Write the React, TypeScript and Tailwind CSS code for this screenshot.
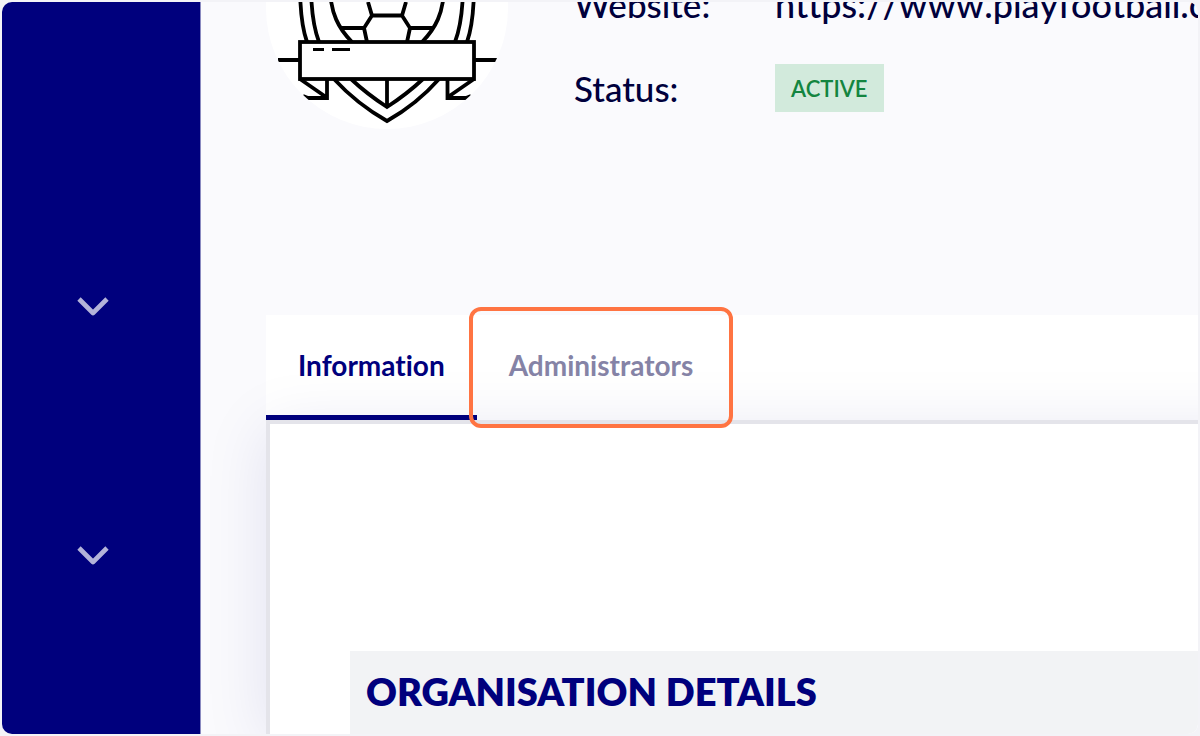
import { ChevronDown } from "lucide-react";

type Detail = {
  label: string;
  value: React.ReactNode;
};

const details: Detail[] = [
  {
    label: "Website:",
    value: (
      <a href="https://www.playfootball.com" className="text-[36px] whitespace-nowrap [font-kerning:none]">
        https://www.playfootball.com
      </a>
    ),
  },
  {
    label: "Status:",
    value: (
      <span className="flex h-12 items-center bg-[#d2eadc] px-4 text-[22px] font-semibold text-[#138540]">ACTIVE</span>
    ),
  },
];

const menuGroups = ["Expand competitions menu", "Expand settings menu"];

function Crest() {
  return (
    <svg
      viewBox="1 2 242 242"
      className="mb-px size-[242px] shrink-0 rounded-full bg-white"
      fill="none"
      stroke="#000"
      strokeWidth="3.8"
      role="img"
      aria-label="Club crest"
    >
      {/* shield sides */}
      <path d="M35 100C35 122 36 140 42 157M46 100C46 124 48 141 54 157" />
      <path d="M209 100C209 122 208 140 202 157M198 100C198 124 196 141 190 157" />
      {/* ball */}
      <path d="M65 105C66 128 73 143 87 157M179 105C178 128 171 143 157 157" />
      <path d="M103 117L107 130.500H137L141 117M107 130.500L99 143L102 157M137 130.500L145 143L142 157M75 143H99M145 143H169" />
      {/* shield tip */}
      <path d="M69 194Q92 219 122 236Q152 219 174 194M86 194Q102 209 122 222Q142 209 158 194M122 194V222" />
      {/* ribbon */}
      <path d="M35 194L61 212M62 194V213H43L38 211M209 194L183 212M182.500 194V213H201L206 211" />
      <path d="M13 175H35M209 175H232" />
      <rect x="35" y="157" width="174" height="37" fill="#fff" />
      <path d="M48 164.500H59M67 164.500H85" strokeWidth="3" />
    </svg>
  );
}

function Sidebar() {
  return (
    <nav aria-label="Main" className="flex w-[199px] shrink-0 flex-col border-r border-[#8a8ac0] bg-[#00007d] pt-[179px]">
      {menuGroups.map((label) => (
        <button key={label} type="button" aria-label={label} className="flex h-[249px] items-center justify-center pr-4">
          <ChevronDown className="size-14 text-[#b3b3d9]" strokeWidth={2} strokeLinecap="butt" />
        </button>
      ))}
    </nav>
  );
}

export default function App() {
  return (
    <div className="h-screen bg-[#f3f3f7] p-0.5 font-['Lato',sans-serif] [font-variant-ligatures:none]">
      <div className="flex h-full overflow-hidden rounded-[10px] bg-[#fafafd]">
        <Sidebar />
        <main className="-mt-[115px] flex min-w-0 flex-1 flex-col pl-[65px]">
          <header className="flex items-end gap-[66px]">
            <Crest />
            <dl className="text-[35px] font-medium text-[#00003c]">
              {details.map(({ label, value }) => (
                <div key={label} className="flex h-[84px] items-center">
                  <dt className="w-[201px] shrink-0">{label}</dt>
                  <dd>{value}</dd>
                </div>
              ))}
            </dl>
          </header>

          <div role="tablist" className="mt-[185px] flex h-[105px] shrink-0 bg-white text-[28px] font-bold">
            <button
              type="button"
              role="tab"
              aria-selected="true"
              className="border-b-[5px] border-[#00007d] px-8 text-[#00007d]"
            >
              Information
            </button>
            <button type="button" role="tab" aria-selected="false" className="relative border-b-[5px] border-transparent px-8 text-[#8583a6]">
              Administrators
              <span className="absolute -inset-x-2 -top-2 -bottom-[13px] rounded-xl border-4 border-[#ff7442]" />
            </button>
          </div>

          <div className="-mr-16 flex flex-1 flex-col border-t-4 border-l-4 border-[#e4e4ea] bg-white pt-[227px] pl-20 shadow-[0_8px_60px_rgba(0,0,128,0.1)]">
            <section className="flex-1 bg-[#f2f3f5] px-4 pt-4">
              <h2 className="text-[38px] leading-12 font-extrabold text-[#00007d]">ORGANISATION DETAILS</h2>
            </section>
          </div>
        </main>
      </div>
    </div>
  );
}
